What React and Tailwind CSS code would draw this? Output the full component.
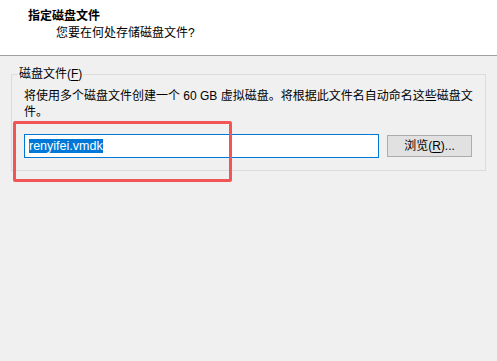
export default function App() {
  const font = { fontFamily: '"Liberation Sans", "Noto Sans CJK SC", sans-serif' };
  return (
    <div
      className="relative w-[497px] h-[361px] bg-[#f0f0f0] text-[12px] text-black overflow-hidden"
      style={font}
    >
      <div className="h-[56px] bg-white border-b border-[#a0a0a0] pt-[8px]">
        <div className="pl-[28px] font-bold leading-[16px]">指定磁盘文件</div>
        <div className="pl-[56px] leading-[16px] pt-[1px]">您要在何处存储磁盘文件?</div>
      </div>
      <div className="px-[11px] pt-[18px]">
        <div className="relative border border-[#dcdcdc] h-[97px] pl-[12px] pt-[13px]">
          <span className="absolute left-[6px] top-[-9px] bg-[#f0f0f0] px-[1px] leading-[16px]">
            磁盘文件(<span className="underline underline-offset-2">F</span>)
          </span>
          <div className="leading-[16px] whitespace-nowrap">
            <span>将使用多个磁盘文件创建一个 60 GB 虚拟磁盘。将根据此文件名自动命名这些磁盘文</span>
            <br />
            <span>件。</span>
          </div>
          <div className="flex items-center gap-[8px] mt-[14px]">
            <div className="w-[355px] h-[24px] bg-white border border-[#0078d7] flex items-center pl-[4px]">
              <span className="bg-[#0078d7] text-white text-[12.5px] leading-[14px] h-[14px] flex items-center">
                renyifei.vmdk
              </span>
            </div>
            <div className="w-[85px] h-[22px] bg-[#e1e1e1] border border-[#adadad] flex items-center justify-center leading-[16px]">
              浏览(<span className="underline underline-offset-2">R</span>)...
            </div>
          </div>
        </div>
      </div>
      <div className="absolute left-[13px] top-[121px] w-[219px] h-[61px] border-[3px] border-[#f25555] rounded-[2px]" />
    </div>
  );
}
